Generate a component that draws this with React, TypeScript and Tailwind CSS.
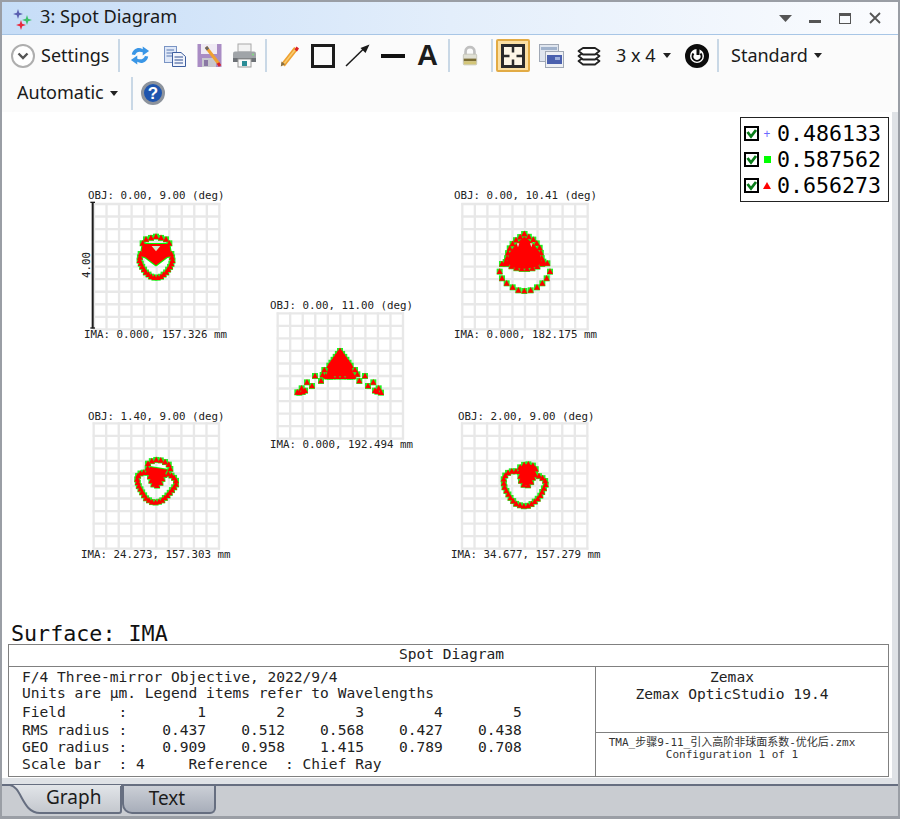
type Pt = [number, number];

const MONO = "[font-family:'DejaVu_Sans_Mono','Noto_Sans_CJK_SC',monospace]";
const UI = "[font-family:'Noto_Sans',sans-serif]";

// evenly spaced markers along a polyline
function along(points: Pt[], n: number): Pt[] {
  const lens = points.slice(1).map((p, i) => Math.hypot(p[0] - points[i][0], p[1] - points[i][1]));
  const total = lens.reduce((a, b) => a + b, 0);
  const out: Pt[] = [];
  for (let k = 0; k < n; k++) {
    let d = (total * k) / (n - 1);
    let i = 0;
    while (i < lens.length - 1 && d > lens[i]) {
      d -= lens[i];
      i++;
    }
    const t = lens[i] ? d / lens[i] : 0;
    out.push([
      points[i][0] + (points[i + 1][0] - points[i][0]) * t,
      points[i][1] + (points[i + 1][1] - points[i][1]) * t,
    ]);
  }
  return out;
}

type Plot = {
  pos: string;
  ox: number;
  oy: number;
  obj: string;
  ima: string;
  objPos: string;
  imaPos: string;
  solids: Pt[][];
  holes: Pt[][];
  markers: Pt[];
  scale?: boolean;
};

const plots: Plot[] = [
  {
    pos: "left-[68px] top-[68px]",
    ox: 72,
    oy: 72,
    obj: "OBJ: 0.00, 9.00 (deg)",
    ima: "IMA: 0.000, 157.326 mm",
    objPos: "left-[18px] top-[10px]",
    imaPos: "left-[14px] top-[149px]",
    solids: [[[218, 192], [298, 192], [304, 228], [290, 232], [258, 256], [226, 232], [212, 228]]],
    holes: [[[245, 198], [271, 198], [258, 214]]],
    markers: [
      ...along([[218, 190], [228, 178], [242, 174], [258, 170], [274, 174], [288, 178], [298, 190]], 7),
      ...along([[212, 222], [208, 240], [215, 258], [228, 278], [245, 291], [258, 294], [272, 291], [288, 278], [302, 258], [308, 240], [304, 222]], 20),
    ],
    scale: true,
  },
  {
    pos: "left-[438px] top-[68px]",
    ox: 67,
    oy: 72,
    obj: "OBJ: 0.00, 10.41 (deg)",
    ima: "IMA: 0.000, 182.175 mm",
    objPos: "left-[14px] top-[10px]",
    imaPos: "left-[14px] top-[149px]",
    solids: [[[253, 170], [228, 192], [208, 220], [200, 250], [225, 264], [253, 266], [285, 262], [306, 250], [298, 215], [278, 190]]],
    holes: [[[230, 190], [238, 190], [234, 202]], [[270, 190], [278, 190], [274, 202]]],
    markers: [
      [197, 246], [186, 252], [179, 275], [186, 295], [200, 310], [218, 322], [235, 331], [253, 333],
      [272, 331], [291, 322], [307, 310], [320, 295], [330, 275], [322, 250], [310, 245],
      ...along([[253, 162], [222, 185], [206, 210], [198, 250]], 8),
      ...along([[253, 162], [285, 182], [300, 205], [308, 250]], 8),
      ...along([[200, 252], [225, 264], [253, 268], [285, 264], [306, 252]], 8),
    ],
  },
  {
    pos: "left-[258px] top-[183px]",
    ox: 53,
    oy: 55,
    obj: "OBJ: 0.00, 11.00 (deg)",
    ima: "IMA: 0.000, 192.494 mm",
    objPos: "left-[10px] top-[5px]",
    imaPos: "left-[10px] top-[144px]",
    solids: [[[240, 168], [210, 205], [204, 215], [200, 244], [280, 244], [276, 215], [270, 205]]],
    holes: [],
    markers: [
      [165, 243], [183, 258], [156, 273], [141, 262], [125, 280], [135, 287], [118, 293], [128, 291], [112, 292],
      [315, 243], [298, 258], [324, 273], [340, 262], [356, 280], [345, 287], [363, 293], [352, 290],
      [193, 225], [188, 240], [210, 245], [197, 243], [285, 225], [292, 238], [270, 245], [280, 243],
      ...along([[240, 168], [208, 212]], 6),
      ...along([[240, 168], [272, 212]], 6),
      ...along([[202, 245], [278, 245]], 6),
    ],
  },
  {
    pos: "left-[68px] top-[293px]",
    ox: 71,
    oy: 55,
    obj: "OBJ: 1.40, 9.00 (deg)",
    ima: "IMA: 24.273, 157.303 mm",
    objPos: "left-[18px] top-[6px]",
    imaPos: "left-[11px] top-[144px]",
    solids: [[[240, 186], [292, 194], [283, 210], [270, 236], [258, 244], [247, 236], [240, 215], [232, 205]]],
    holes: [],
    markers: [
      ...along([[233, 190], [234, 176], [246, 168], [262, 164], [280, 168], [296, 178], [301, 192]], 8),
      ...along([[232, 203], [215, 203], [205, 210], [201, 225], [207, 245], [217, 263], [229, 281], [245, 291], [260, 293], [277, 286], [294, 270], [307, 254], [318, 240], [318, 227], [309, 214], [295, 207]], 26),
      ...along([[240, 215], [247, 236], [258, 244], [270, 236], [283, 210]], 7),
    ],
  },
  {
    pos: "left-[438px] top-[293px]",
    ox: 66,
    oy: 55,
    obj: "OBJ: 2.00, 9.00 (deg)",
    ima: "IMA: 34.677, 157.279 mm",
    objPos: "left-[18px] top-[6px]",
    imaPos: "left-[11px] top-[144px]",
    solids: [[[258, 178], [244, 184], [239, 200], [242, 225], [252, 240], [266, 240], [276, 225], [281, 205], [286, 192], [276, 180]]],
    holes: [],
    markers: [
      ...along([[240, 199], [215, 199], [199, 206], [191, 220], [192, 244], [202, 263], [214, 283], [229, 297], [248, 304], [268, 302], [284, 290], [299, 276], [310, 254], [319, 235], [313, 223], [299, 214], [285, 210]], 27),
      ...along([[242, 200], [239, 188], [258, 176], [280, 182], [288, 194], [281, 208], [276, 228], [266, 241], [252, 241], [242, 226], [240, 200]], 14),
    ],
  },
];

const poly = (pts: Pt[]) => pts.map((p) => p.join(",")).join(" ");

function SpotPlot({ plot }: { plot: Plot }) {
  const ticks = Array.from({ length: 11 }, (_, i) => i * 37.6);
  return (
    <div className={`absolute h-[170px] w-[170px] ${plot.pos}`}>
      <svg viewBox="0 0 510 510" className="absolute inset-0 h-[170px] w-[170px]">
        {ticks.map((t) => (
          <g key={t} stroke="#e8e8e8" strokeWidth="7">
            <line x1={plot.ox + t} y1={plot.oy - 3} x2={plot.ox + t} y2={plot.oy + 379} />
            <line x1={plot.ox - 3} y1={plot.oy + t} x2={plot.ox + 379} y2={plot.oy + t} />
          </g>
        ))}
        {plot.scale && (
          <g stroke="#1c1c1c">
            <line x1="68" y1="67" x2="68" y2="445" strokeWidth="6" />
            <line x1="61" y1="67" x2="75" y2="67" strokeWidth="4" />
            <line x1="61" y1="444" x2="75" y2="444" strokeWidth="4" />
          </g>
        )}
        {plot.solids.map((s, i) => (
          <polygon key={i} points={poly(s)} fill="#00ff00" stroke="#00ff00" strokeWidth="6" strokeLinejoin="round" />
        ))}
        {plot.markers.map(([x, y], i) => (
          <rect key={i} x={x - 9} y={y - 9} width="18" height="18" fill="#20f020" />
        ))}
        {plot.solids.map((s, i) => (
          <polygon key={i} points={poly(s)} fill="#ff0000" />
        ))}
        {plot.markers.map(([x, y], i) => (
          <polygon key={i} points={poly([[x, y - 10], [x + 9, y + 7], [x - 9, y + 7]])} fill="#ff0000" />
        ))}
        {plot.holes.map((s, i) => (
          <polygon key={i} points={poly(s)} fill="#d8e8c8" />
        ))}
      </svg>
      {plot.scale && (
        <span className={`absolute left-[4px] top-[79px] -rotate-90 text-[10.8px] leading-[12px] text-[#222] ${MONO}`}>4.00</span>
      )}
      <span className={`absolute whitespace-pre text-[10.8px] leading-[12px] text-[#222] ${MONO} ${plot.objPos}`}>{plot.obj}</span>
      <span className={`absolute whitespace-pre text-[10.8px] leading-[12px] text-[#222] ${MONO} ${plot.imaPos}`}>{plot.ima}</span>
    </div>
  );
}

function Sep() {
  return <div className="h-[33px] w-[2px] bg-[#c9d8e6]" />;
}

function Caret() {
  return (
    <svg width="8" height="5" viewBox="0 0 8 5">
      <path d="M0 0H8L4 5Z" fill="#222" />
    </svg>
  );
}

function AppIcon() {
  return (
    <svg width="24" height="26" viewBox="0 0 24 26">
      <path d="M6 5L7.2 8.8L11 10L7.2 11.2L6 15L4.8 11.2L1 10L4.8 8.8Z" transform="translate(3 -1)" fill="#5a5fb0" />
      <path d="M6 5L7.2 8.8L11 10L7.2 11.2L6 15L4.8 11.2L1 10L4.8 8.8Z" transform="translate(12 5)" fill="#3cc06a" />
      <path d="M6 5L7.2 8.8L11 10L7.2 11.2L6 15L4.8 11.2L1 10L4.8 8.8Z" transform="translate(6 10)" fill="#e8283c" />
    </svg>
  );
}

function RefreshIcon() {
  return (
    <svg width="20" height="23" viewBox="0 0 22 24">
      <path d="M2 11C3 5 9 2 14 5L14 2L21 7L14 12L14 8.5C10 7 7 8 5.5 11.5Z" fill="#3a96e6" />
      <path d="M20 13C19 19 13 22 8 19L8 22L1 17L8 12L8 15.500C12 17 15 16 16.500 12.500Z" fill="#3a96e6" />
    </svg>
  );
}

function CopyIcon() {
  return (
    <svg width="24" height="24" viewBox="0 0 24 24">
      <rect x="1.500" y="2.500" width="12" height="16" fill="#dfe8f8" stroke="#7a94c4" />
      <path d="M3.500 6H11M3.500 9H11M3.500 12H11" stroke="#5a78b0" />
      <path d="M9.500 8.500H18L22.500 12.500V22.500H9.500Z" fill="#f2f5fc" stroke="#3f5f9f" />
      <path d="M11.500 13H20M11.500 16H20M11.500 19H20" stroke="#2f4f90" strokeWidth="1.200" />
    </svg>
  );
}

function SaveIcon() {
  return (
    <svg width="25" height="25" viewBox="0 0 25 25">
      <rect x="0.500" y="1" width="24" height="23" fill="#a98cc4" />
      <rect x="4" y="1" width="16" height="10" fill="#efeaf4" />
      <rect x="5" y="15" width="14" height="9" fill="#c8c8ce" />
      <rect x="7" y="17" width="4" height="6" fill="#8a78a4" />
      <path d="M9 4L22 21" stroke="#f0a030" strokeWidth="3" />
      <path d="M9 4L11 6.500" stroke="#666" strokeWidth="3" />
      <path d="M21 20L23 23" stroke="#d8202c" strokeWidth="3" />
    </svg>
  );
}

function PrintIcon() {
  return (
    <svg width="25" height="25" viewBox="0 0 25 25">
      <rect x="6" y="1" width="13" height="8" fill="#f2f2f2" stroke="#a8a8a8" />
      <rect x="1" y="8.500" width="23" height="9" rx="2" fill="#a0a4a8" />
      <rect x="1" y="15" width="23" height="4" fill="#6c7075" />
      <circle cx="21" cy="11.500" r="1" fill="#7fe07f" />
      <rect x="6" y="16" width="13" height="8" fill="#fafafa" stroke="#9a9a9a" />
      <rect x="10" y="18" width="5" height="5" fill="#2a8c96" />
    </svg>
  );
}

function PencilIcon() {
  return (
    <svg width="20" height="22" viewBox="0 0 20 22">
      <path d="M3 20L16 3.500" stroke="#eea030" strokeWidth="4.500" />
      <path d="M3 20L16 3.500" stroke="#f8cc70" strokeWidth="1.500" />
      <path d="M0.800 21.500L1.500 16.500L5.200 19.300Z" fill="#8a7040" />
      <path d="M14.500 4.500L16.500 1.500L19 3.500L17 6.500Z" fill="#dc2026" />
    </svg>
  );
}

function ArrowIcon() {
  return (
    <svg width="25" height="23" viewBox="0 0 25 23">
      <path d="M1 22L19 4.500" stroke="#1a1a1a" strokeWidth="1.500" />
      <path d="M24.500 0.500L20.500 9L15.500 4Z" fill="#1a1a1a" />
    </svg>
  );
}

function LockIcon() {
  return (
    <svg width="16" height="23" viewBox="0 0 18 23">
      <path d="M4 11V7C4 0.500 14 0.500 14 7V11" fill="none" stroke="#c0c0c0" strokeWidth="3" />
      <rect x="1.500" y="10" width="15" height="12" rx="1" fill="#e0e0d4" stroke="#c4c4b8" />
      <rect x="2" y="15" width="14" height="3" fill="#7a6c32" />
      <rect x="2" y="18" width="14" height="3.500" fill="#d4c678" />
    </svg>
  );
}

function GridIcon() {
  return (
    <svg width="24" height="24" viewBox="0 0 24 24">
      <rect x="1.500" y="1.500" width="21" height="21" fill="#fdf6e6" stroke="#2a2a2a" strokeWidth="3" />
      <path d="M12 2V8.500M12 15.500V22M2 12H8.500M15.500 12H22" stroke="#2a2a2a" strokeWidth="2.500" />
    </svg>
  );
}

function WindowsIcon() {
  return (
    <svg width="25" height="24" viewBox="0 0 25 24">
      <rect x="0.500" y="0.500" width="19" height="17" fill="#dfe5ee" stroke="#a0a8b5" />
      <rect x="2" y="3" width="16" height="3" fill="#a0b2cc" />
      <rect x="6.500" y="7.500" width="18" height="16" fill="#eef0f4" stroke="#a0a8b5" />
      <rect x="8" y="11" width="15" height="9" fill="#4a60ae" />
      <rect x="16" y="13" width="5" height="3" fill="#9eb0dc" />
    </svg>
  );
}

function LayersIcon() {
  return (
    <svg width="24" height="20" viewBox="0 0 24 20">
      <path d="M1.500 15L6 12H18L22.500 15L18 18.500H6Z" fill="#fff" stroke="#222" strokeWidth="1.800" strokeLinejoin="round" />
      <path d="M1.500 10L6 7H18L22.500 10L18 13.500H6Z" fill="#fff" stroke="#222" strokeWidth="1.800" strokeLinejoin="round" />
      <path d="M1.500 5L6 2H18L22.500 5L18 8.500H6Z" fill="#fff" stroke="#222" strokeWidth="1.800" strokeLinejoin="round" />
    </svg>
  );
}

function CycleIcon() {
  return (
    <svg width="24" height="24" viewBox="0 0 24 24">
      <circle cx="12" cy="12" r="9.500" fill="#fff" stroke="#0c0c0c" strokeWidth="5" />
      <path d="M8.500 9.500A4.500 4.500 0 1 0 15.500 9.500" fill="none" stroke="#0c0c0c" strokeWidth="2" />
      <path d="M13 4V11" stroke="#0c0c0c" strokeWidth="3" />
    </svg>
  );
}

function HelpIcon() {
  return (
    <div className="flex h-[24px] w-[24px] items-center justify-center rounded-full border-[3px] border-[#8d939c] bg-[#1f55ae]">
      <span className="text-[17px] font-bold leading-none text-white [font-family:'Liberation_Sans',sans-serif]">?</span>
    </div>
  );
}

function Check() {
  return (
    <svg width="15" height="15" viewBox="0 0 15 15">
      <rect x="1" y="1" width="13" height="13" fill="#fff" stroke="#000" strokeWidth="2" />
      <path d="M3.500 6L7 10.500L12 4" fill="none" stroke="#0a7d1a" strokeWidth="2.800" />
    </svg>
  );
}

function Legend() {
  const rows = [
    { value: "0.486133", mark: <span className="text-[12px] leading-none text-[#6a6aff]">+</span> },
    { value: "0.587562", mark: <div className="h-[7px] w-[7px] bg-[#00ff00]" /> },
    {
      value: "0.656273",
      mark: (
        <svg width="8" height="7" viewBox="0 0 8 7">
          <path d="M4 0L8 7H0Z" fill="#ff0000" />
        </svg>
      ),
    },
  ];
  return (
    <div className="absolute right-[3px] top-[5px] flex h-[85px] w-[149px] flex-col justify-center border border-[#222] bg-white pl-[3px]">
      {rows.map((r) => (
        <div key={r.value} className="flex h-[26px] items-center">
          <Check />
          <div className="flex w-[17px] justify-center pr-[1px]">{r.mark}</div>
          <span className={`ml-[1px] text-[21.6px] leading-none text-black ${MONO}`}>{r.value}</span>
        </div>
      ))}
    </div>
  );
}

function InfoTable() {
  return (
    <div className={`mb-[1px] ml-[6px] mr-[3px] flex h-[133px] flex-col border border-[#808080] text-[14.57px] text-[#222] ${MONO}`}>
      <div className="h-[22px] shrink-0 border-b border-[#808080] pl-[6px] text-center leading-[18px]">Spot Diagram</div>
      <div className="flex flex-1">
        <div className="w-[587px] whitespace-pre border-r border-[#808080] pl-[13px] leading-[17.5px]">
          <div className="pt-[1px]">F/4 Three-mirror Objective, 2022/9/4</div>
          <div className="-mt-[2px]">Units are µm. Legend items refer to Wavelengths</div>
          <div className="mt-[2px]">{"Field      :        1        2        3        4        5"}</div>
          <div>{"RMS radius :    0.437    0.512    0.568    0.427    0.438"}</div>
          <div>{"GEO radius :    0.909    0.958    1.415    0.789    0.708"}</div>
          <div className="-mt-[1px]">{"Scale bar  : 4     Reference  : Chief Ray"}</div>
        </div>
        <div className="flex flex-1 flex-col pr-[20px] text-center">
          <div className="-mr-[20px] h-[66px] border-b border-[#808080] pr-[20px] pt-[1px] leading-[17px]">
            <div>Zemax</div>
            <div>Zemax OpticStudio 19.4</div>
          </div>
          <div className="pt-[4px] text-[11px] leading-[12px] text-[#333]">
            <div>TMA_步骤9-11_引入高阶非球面系数-优化后.zmx</div>
            <div>Configuration 1 of 1</div>
          </div>
        </div>
      </div>
    </div>
  );
}

function GraphTab() {
  return (
    <div className="relative -mt-[2px] h-[32px] w-[120px] shrink-0">
      <svg width="120" height="32" viewBox="0 0 120 32" className="absolute inset-0">
        <defs>
          <linearGradient id="graphTab" x1="0" y1="0" x2="0" y2="1">
            <stop offset="0" stopColor="#e2e5e9" />
            <stop offset="1" stopColor="#c3c7cd" />
          </linearGradient>
        </defs>
        <path d="M0 1H8C20 3 20 29 38 29H117Q119 29 119 27V1Z" fill="url(#graphTab)" />
        <path d="M0 1H8C20 3 20 29 38 29H117Q119 29 119 27V2" fill="none" stroke="#666e80" strokeWidth="2" />
      </svg>
      <span className={`absolute left-[44px] top-[0px] text-[19px] leading-[26px] text-[#1c1c1c] ${UI}`}>Graph</span>
    </div>
  );
}

export default function App() {
  return (
    <div className={`flex h-[819px] w-[900px] flex-col border-x-2 border-b-[3px] border-t-2 border-[#9a9ea5] bg-[#dfe2e6] ${UI}`}>
      <div className="flex h-[33px] shrink-0 items-center border-b border-[#a8c6e6] bg-gradient-to-r from-[#c6ddf7] via-[#e3eefb] to-[#fbfcfe] pl-[7px] pr-[17px]">
        <AppIcon />
        <span className="-mt-[2px] ml-[7px] text-[18.2px] text-[#1a1a1a]">3: Spot Diagram</span>
        <div className="ml-auto flex items-center">
          <svg width="13" height="7" viewBox="0 0 13 7">
            <path d="M0 0H13L6.500 7Z" fill="#555" />
          </svg>
          <div className="ml-[17px] mt-[6px] h-[3px] w-[12px] bg-[#555]" />
          <div className="ml-[18px] h-[11px] w-[12px] border-[1.5px] border-t-[3px] border-[#555]" />
          <svg width="12" height="12" viewBox="0 0 12 12" className="ml-[18px]">
            <path d="M1 1L11 11M11 1L1 11" stroke="#555" strokeWidth="1.800" />
          </svg>
        </div>
      </div>

      <div className="shrink-0 bg-[#fbfbfb] text-[18px] text-[#1a1a1a]">
        <div className="flex h-[39px] items-center pt-[2px]">
          <div className="ml-[9px] flex h-[24px] w-[24px] items-center justify-center rounded-full border-2 border-[#aeaeae] bg-white">
            <svg width="12" height="8" viewBox="0 0 12 8">
              <path d="M1.500 1.500L6 6L10.500 1.500" fill="none" stroke="#555" strokeWidth="2.400" />
            </svg>
          </div>
          <span className="ml-[6px] w-[77px]">Settings</span>
          <Sep />
          <div className="ml-[2px] flex w-[35px] justify-center"><RefreshIcon /></div>
          <div className="flex w-[35px] justify-center"><CopyIcon /></div>
          <div className="flex w-[35px] justify-center"><SaveIcon /></div>
          <div className="flex w-[35px] justify-center"><PrintIcon /></div>
          <div className="ml-[3px]"><Sep /></div>
          <div className="ml-[5px] flex w-[35px] justify-center"><PencilIcon /></div>
          <div className="flex w-[32px] justify-center">
            <div className="h-[24px] w-[24px] border-[3px] border-[#1c1c1c]" />
          </div>
          <div className="flex w-[36px] justify-center"><ArrowIcon /></div>
          <div className="flex w-[35px] justify-center">
            <div className="h-[4px] w-[24px] bg-[#111]" />
          </div>
          <div className="flex w-[35px] justify-center">
            <span className="text-[29px] font-bold leading-none text-[#1c1c1c] [font-family:'Liberation_Sans',sans-serif]">A</span>
          </div>
          <div className="ml-[3px]"><Sep /></div>
          <div className="flex w-[40px] justify-center"><LockIcon /></div>
          <div className="ml-[1px]"><Sep /></div>
          <div className="ml-[3px] flex h-[33px] w-[34px] items-center justify-center rounded-[2px] border-2 border-[#e2ab45] bg-[#fbe0a4]">
            <GridIcon />
          </div>
          <div className="flex w-[43px] justify-center"><WindowsIcon /></div>
          <div className="flex w-[32px] justify-center"><LayersIcon /></div>
          <span className="ml-[11px] w-[46px]">3 x 4</span>
          <div className="flex w-[10px] justify-center"><Caret /></div>
          <div className="ml-[13px]"><CycleIcon /></div>
          <div className="ml-[8px]"><Sep /></div>
          <span className="ml-[12px] w-[77px]">Standard</span>
          <div className="flex w-[20px] justify-center"><Caret /></div>
        </div>
        <div className="flex h-[38px] items-center">
          <span className="-mt-[2px] ml-[15px] w-[91px]">Automatic</span>
          <div className="flex w-[12px] justify-center"><Caret /></div>
          <div className="ml-[11px]"><Sep /></div>
          <div className="ml-[8px]"><HelpIcon /></div>
        </div>
      </div>

      <div className="flex min-h-0 flex-1">
        <div className="relative mr-[6px] flex flex-1 flex-col justify-end bg-white">
          {plots.map((p) => (
            <SpotPlot key={p.obj} plot={p} />
          ))}
          <Legend />
          <div className={`h-[21px] pl-[9px] text-[21.7px] leading-[22px] text-[#111] ${MONO}`}>Surface: IMA</div>
          <InfoTable />
        </div>
      </div>

      <div className="h-[6px] shrink-0" />
      <div className="flex h-[32px] shrink-0 border-t-2 border-[#666e80] bg-[#c9ccd1]">
        <GraphTab />
        <div className="flex h-[28px] w-[94px] items-center justify-center rounded-b-[6px] rounded-bl-[10px] border-x-2 border-b-2 border-[#666e80] bg-gradient-to-b from-[#cbcfd6] to-[#a8aeba] pb-[2px] pr-[4px] text-[19px] leading-none text-[#1c1c1c]">
          Text
        </div>
      </div>
    </div>
  );
}
